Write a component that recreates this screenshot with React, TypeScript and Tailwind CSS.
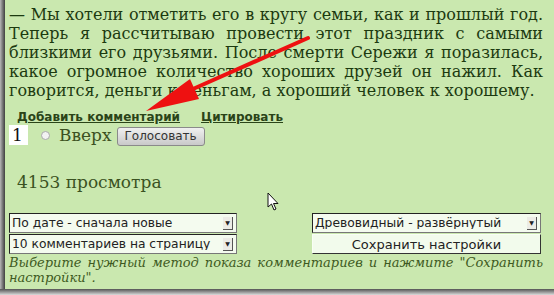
import React from "react";

const serif = { fontFamily: '"DejaVu Serif", "Liberation Serif", serif' };
const sans = { fontFamily: '"DejaVu Sans", "Liberation Sans", sans-serif' };

function Line({ children, last = false }: { children: React.ReactNode; last?: boolean }) {
  return (
    <div className={last ? "text-left whitespace-nowrap" : "text-justify [text-align-last:justify] whitespace-nowrap"}>
      {children}
    </div>
  );
}

function FakeSelect({ label, w }: { label: string; w: string }) {
  return (
    <div
      className={`${w} h-[20px] flex items-center bg-[#f4fbef] border border-t-[#222] border-l-[#222] border-b-[#777] border-r-[#777] pl-[2px] pr-[3px] text-[12.3px] text-[#222]`}
      style={sans}
    >
      <span className="flex-1 truncate leading-none">{label}</span>
      <span className="w-[10px] h-[13px] bg-[#ecece6] border-r border-b border-[#555] flex items-center justify-center text-[6px] text-[#222] leading-none">
        ▼
      </span>
    </div>
  );
}

export default function App() {
  return (
    <div className="w-[554px] h-[295px] bg-[#e4e4e4] overflow-hidden relative">
      <div className="flex h-[289px]">
        <div className="w-[5px] h-full bg-gradient-to-r from-[#b8b8b8] to-[#404040]" />
        <div className="w-[549px] h-full bg-[#cae8af] relative">
          <div className="pl-[4px] pr-[11px] pt-[5px] text-[16px] leading-[19px] text-[#1c3a10]" style={serif}>
            <Line>— Мы хотели отметить его в кругу семьи, как и прошлый год.</Line>
            <Line>Теперь я рассчитываю провести этот праздник с самыми</Line>
            <Line>близкими его друзьями. После смерти Сережи я поразилась,</Line>
            <Line>какое огромное количество хороших друзей он нажил. Как</Line>
            <Line last>говорится, деньги к деньгам, а хороший человек к хорошему.</Line>
          </div>
          <div className="flex gap-[21px] pl-[12px] mt-[10px] text-[12px] font-bold leading-[14px] text-[#2a4418] underline" style={sans}>
            <span>Добавить комментарий</span>
            <span>Цитировать</span>
          </div>
          <div className="flex items-center pl-[4px] mt-[0px] h-[22px]" style={serif}>
            <div className="w-[19px] h-[20px] bg-white text-[17px] leading-[20px] text-[#111] pl-[3px]">1</div>
            <div className="ml-[13px] w-[9px] h-[9px] rounded-full bg-[#f2f2f2] border border-[#aaa]" />
            <span className="ml-[9px] text-[17px] text-[#3c5222] leading-none">Вверх</span>
            <button
              className="ml-[5px] mt-[2px] w-[88px] h-[19px] rounded-[3px] border border-[#8a8a8a] bg-gradient-to-b from-[#f0f0f0] to-[#c9c9c9] text-[12px] text-[#333] leading-none"
              style={sans}
            >
              Голосовать
            </button>
          </div>
          <div className="pl-[12px] mt-[26px] text-[17px] leading-[20px] text-[#3a5222]" style={serif}>
            4153 просмотра
          </div>
          <div className="flex justify-between pl-[4px] pr-[13px] mt-[21px]">
            <div className="flex flex-col gap-[1px]">
              <FakeSelect w="w-[228px]" label="По дате - сначала новые" />
              <FakeSelect w="w-[228px]" label="10 комментариев на страницу" />
            </div>
            <div className="flex flex-col gap-[1px]">
              <FakeSelect w="w-[229px]" label="Древовидный - развёрнутый" />
              <div
                className="w-[229px] h-[20px] bg-[#f2fbec] border border-t-[#f8fff4] border-l-[#f8fff4] border-b-[#333] border-r-[#333] text-[13px] text-[#222] flex items-center justify-center leading-none"
                style={sans}
              >
                Сохранить настройки
              </div>
            </div>
          </div>
          <div className="pl-[4px] pr-[11px] mt-[1px] text-[13px] leading-[15px] italic text-[#3e5a22]" style={serif}>
            <Line>Выберите нужный метод показа комментариев и нажмите "Сохранить</Line>
            <Line last>настройки".</Line>
          </div>
          <svg className="absolute left-[0px] top-[0px]" width="549" height="289" viewBox="0 0 549 289">
            <path d="M303 38 L188 89" stroke="#ee1111" strokeWidth="4" strokeLinecap="round" />
            <polygon points="141,111 185,79 194,99" fill="#ee1111" />
          </svg>
          <svg className="absolute left-[262px] top-[192px]" width="14" height="20" viewBox="0 0 14 20">
            <path d="M1 1 L1 15 L4.5 12 L7 18 L9 17 L6.5 11.5 L11 11.5 Z" fill="#fff" stroke="#111" strokeWidth="1" />
          </svg>
        </div>
      </div>
      <div className="h-[6px] bg-gradient-to-b from-[#555] to-[#dcdcdc]" />
    </div>
  );
}
